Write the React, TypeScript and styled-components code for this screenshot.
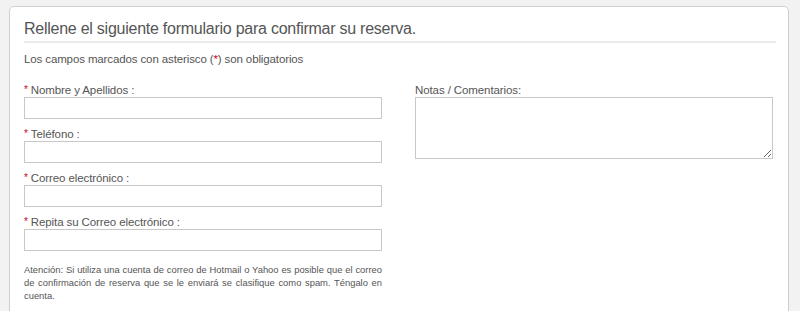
import React from "react";
import styled, { createGlobalStyle } from "styled-components";

const Global = createGlobalStyle`
  html, body { margin: 0; padding: 0; background: #f2f2f2; }
  body { font-family: "Liberation Sans", Arial, Helvetica, sans-serif; color: #555; }
  * { box-sizing: border-box; }
`;

const Card = styled.div`
  margin: 6px 11px 0 9px;
  background: #fff;
  border: 1px solid #cfcfcf;
  border-radius: 5px;
  padding: 0 12px 20px 14px;
  min-height: 320px;
`;

const Title = styled.h2`
  margin: 0;
  padding-top: 11px;
  padding-bottom: 1px;
  font-size: 16px;
  letter-spacing: -0.25px;
  line-height: 22px;
  font-weight: normal;
  color: #555;
  border-bottom: 2px solid #ebebeb;
`;

const Intro = styled.p`
  margin: 8px 0 0;
  font-size: 11.5px;
  letter-spacing: -0.12px;
  line-height: 16px;
  color: #555;
`;

const Req = styled.span`
  color: #d0021b;
`;

const Columns = styled.div`
  display: grid;
  grid-template-columns: 358px 358px;
  column-gap: 33px;
  margin-top: 17px;
`;

const Column = styled.div`
  display: flex;
  flex-direction: column;
  gap: 9px;
`;

const Field = styled.div`
  display: flex;
  flex-direction: column;
`;

const Label = styled.label`
  display: block;
  height: 13px;
  font-size: 11.5px;
  letter-spacing: -0.1px;
  line-height: 13px;
  color: #555;
  white-space: nowrap;
`;

const Star = styled.span`
  color: #d0021b;
  font-size: 10px;
  line-height: 0;
  vertical-align: 1px;
  margin-right: 3px;
`;

const Input = styled.input`
  display: block;
  width: 100%;
  height: 22px;
  margin: 0;
  border: 1px solid #c8c8c8;
  background: #fff;
  padding: 2px 4px;
  font: inherit;
  outline: none;
`;

const TextArea = styled.textarea`
  display: block;
  width: 100%;
  height: 62px;
  margin: 0;
  border: 1px solid #c8c8c8;
  background: #fff;
  padding: 2px 4px;
  font: inherit;
  outline: none;
  resize: both;
`;

const Note = styled.p`
  margin: 3px 0 0;
  font-size: 9.4px;
  line-height: 13px;
  text-align: justify;
  color: #555;
`;

const fields = [
  "Nombre y Apellidos :",
  "Teléfono :",
  "Correo electrónico :",
  "Repita su Correo electrónico :",
];

export default function App() {
  return (
    <>
      <Global />
      <Card>
        <Title>Rellene el siguiente formulario para confirmar su reserva.</Title>
        <Intro>
          Los campos marcados con asterisco (<Req>*</Req>) son obligatorios
        </Intro>
        <Columns>
          <Column>
            {fields.map((f) => (
              <Field key={f}>
                <Label>
                  <Star>*</Star>
                  {f}
                </Label>
                <Input type="text" />
              </Field>
            ))}
            <Note>
              Atención: Si utiliza una cuenta de correo de Hotmail o Yahoo es posible que el correo de
              confirmación de reserva que se le enviará se clasifique como spam. Téngalo en cuenta.
            </Note>
          </Column>
          <Column>
            <Field>
              <Label>Notas / Comentarios:</Label>
              <TextArea />
            </Field>
          </Column>
        </Columns>
      </Card>
    </>
  );
}
